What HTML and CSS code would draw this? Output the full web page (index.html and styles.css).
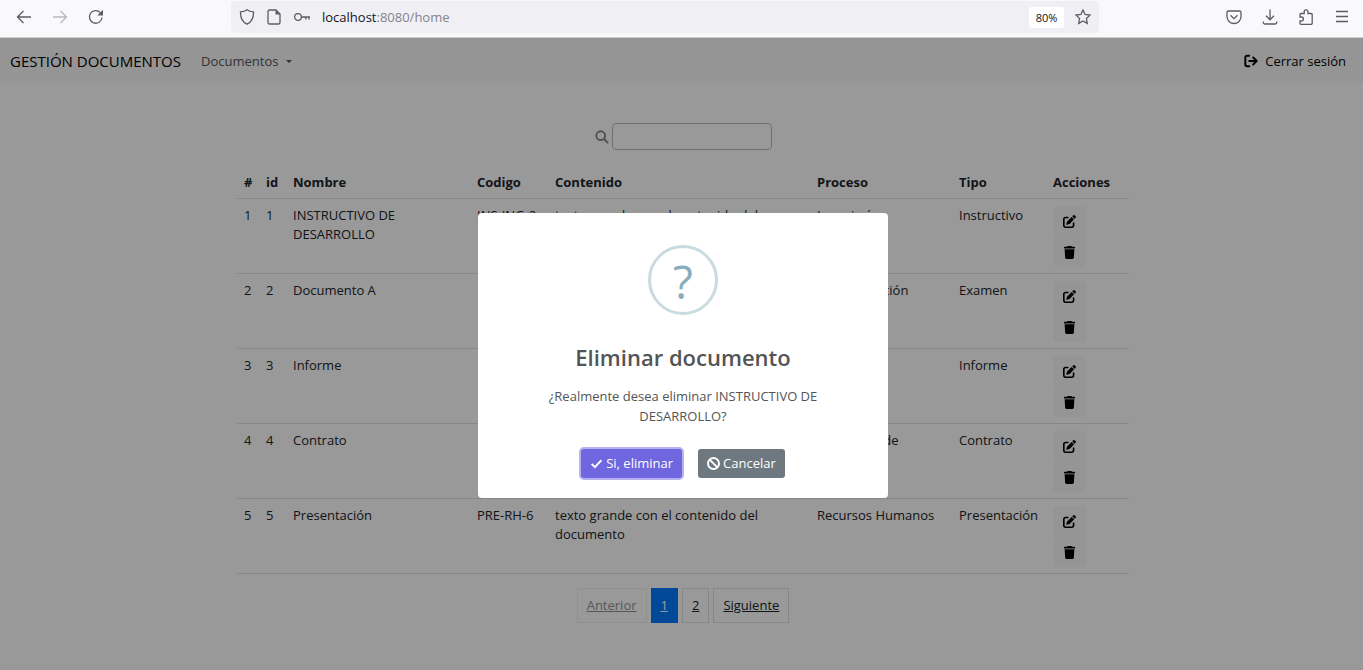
FILE: index.html
```html
<!DOCTYPE html>
<html lang="es">
<head>
<meta charset="utf-8">
<title>Gestión Documentos</title>
<link rel="stylesheet" href="styles.css">
</head>
<body>
<svg class="sprite" aria-hidden="true">
  <symbol id="edit" viewBox="0 0 512 512"><path d="M471.600 21.700c-21.900-21.900-57.300-21.900-79.200 0L362.300 51.700l97.900 97.900 30.100-30.100c21.900-21.900 21.900-57.300 0-79.200L471.600 21.700zm-299.200 220c-6.100 6.100-10.800 13.600-13.500 21.900l-29.600 88.800c-2.900 8.600-.6 18.100 5.800 24.600s15.900 8.700 24.600 5.800l88.800-29.600c8.200-2.700 15.700-7.400 21.900-13.500L437.700 172.300 339.700 74.300 172.400 241.700zM96 64C43 64 0 107 0 160V416c0 53 43 96 96 96H352c53 0 96-43 96-96V320c0-17.700-14.300-32-32-32s-32 14.300-32 32v96c0 17.700-14.300 32-32 32H96c-17.700 0-32-14.300-32-32V160c0-17.700 14.300-32 32-32h96c17.700 0 32-14.300 32-32s-14.300-32-32-32H96z"/></symbol>
  <symbol id="trash" viewBox="0 0 448 512"><path d="M135.200 17.700L128 32H32C14.300 32 0 46.300 0 64S14.300 96 32 96H416c17.700 0 32-14.300 32-32s-14.300-32-32-32H320l-7.200-14.300C307.400 6.800 296.300 0 284.200 0H163.800c-12.100 0-23.200 6.800-28.600 17.700zM416 128H32L53.200 467c1.600 25.300 22.600 45 47.900 45H346.900c25.300 0 46.300-19.700 47.900-45L416 128z"/></symbol>
</svg>

<header class="browser">
  <div class="browser-side">
    <button class="tool" aria-label="Atrás"><svg viewBox="0 0 16 16"><path d="M15 8H1.500M7.500 2L1.500 8l6 6"/></svg></button>
    <button class="tool tool-off" aria-label="Adelante"><svg viewBox="0 0 16 16"><path d="M1 8h13.500M8.500 2l6 6-6 6"/></svg></button>
    <button class="tool" aria-label="Recargar"><svg viewBox="0 0 16 16"><path d="M14 8.500A6.300 6.300 0 1 1 12.300 3.600"/><path class="solid" d="M15 .8v5.700H9.300z"/></svg></button>
  </div>
  <div class="address">
    <svg viewBox="0 0 16 16"><path d="M8 .8c2 1.600 4.300 2 6.500 2.100.2 5.800-1.500 9.900-6.500 12.300C3 12.800 1.300 8.700 1.500 2.900 3.700 2.800 6 2.400 8 .8z"/></svg>
    <svg class="page-icon" viewBox="0 0 16 16"><path d="M3.500 1H10l4 4v8.500a1.500 1.500 0 0 1-1.500 1.500h-9A1.500 1.500 0 0 1 2 13.500v-11A1.500 1.500 0 0 1 3.500 1z"/><path class="solid" d="M9.500 1v4.500H14z"/></svg>
    <svg class="key-icon" viewBox="0 0 18 16"><circle cx="5" cy="8" r="3.400"/><path d="M8.400 8H17M12.800 8v2.600M16 8v2.600"/></svg>
    <span class="url">localhost<span class="url-rest">:8080/home</span></span>
    <button class="zoom-level">80%</button>
    <svg viewBox="0 0 16 16"><path d="M8 1l2.100 4.500 4.900.6-3.600 3.400.9 4.900L8 12l-4.300 2.400.9-4.900L1 6.100l4.900-.6z"/></svg>
  </div>
  <div class="browser-side browser-side-end">
    <button class="tool" aria-label="Pocket"><svg viewBox="0 0 16 16"><path d="M2.500 2h11A1.500 1.500 0 0 1 15 3.500V7.500a7 7 0 0 1-14 0v-4A1.500 1.500 0 0 1 2.500 2zM4.500 6.300L8 9.600l3.500-3.300"/></svg></button>
    <button class="tool" aria-label="Descargas"><svg viewBox="0 0 16 16"><path d="M8 .5v10M4 6.800l4 4 4-4M1.300 12.500v1a1.500 1.500 0 0 0 1.500 1.500h10.400a1.500 1.500 0 0 0 1.500-1.500v-1"/></svg></button>
    <button class="tool" aria-label="Extensiones"><svg viewBox="0 0 16 16"><path d="M3 15.300h10.200a1 1 0 0 0 1-1V5.500a1 1 0 0 0-1-1H10V2.700a1.900 1.900 0 0 0-3.800 0v1.800H3a1 1 0 0 0-1 1V8h1.500a1.900 1.900 0 0 1 0 3.800H2v2.500a1 1 0 0 0 1 1z"/></svg></button>
    <button class="tool" aria-label="Menú"><svg viewBox="0 0 16 16"><path d="M2 2.500h12M2 7.500h12M2 12.500h12"/></svg></button>
  </div>
</header>

<div class="app">
  <nav class="navbar">
    <a class="brand" href="#">GESTIÓN DOCUMENTOS</a>
    <button class="menu">Documentos<span class="caret"></span></button>
    <a class="logout" href="#"><svg viewBox="0 0 16 16"><path d="M6 2H3.500A2 2 0 0 0 1.500 4v8a2 2 0 0 0 2 2H6M6 8h8M10.500 4l4 4-4 4"/></svg>Cerrar sesión</a>
  </nav>
  <main class="content">
    <label class="search"><svg viewBox="0 0 16 16"><circle cx="6.500" cy="6.500" r="5"/><path d="M10.300 10.300L15 15"/></svg><input type="text" aria-label="Buscar"></label>
    <table class="docs">
      <colgroup><col class="c-num"><col class="c-id"><col class="c-name"><col class="c-code"><col class="c-text"><col class="c-proc"><col class="c-type"><col class="c-act"></colgroup>
      <thead><tr><th>#</th><th>id</th><th>Nombre</th><th>Codigo</th><th>Contenido</th><th>Proceso</th><th>Tipo</th><th>Acciones</th></tr></thead>
      <tbody>
        <tr><td>1</td><td>1</td><td>INSTRUCTIVO DE<br>DESARROLLO</td><td>INS-ING-2</td><td>texto grande con el contenido del documento</td><td>Ingeniería</td><td>Instructivo</td><td><button class="act" aria-label="Editar"><svg><use href="#edit"/></svg></button><button class="act" aria-label="Eliminar"><svg><use href="#trash"/></svg></button></td></tr>
        <tr><td>2</td><td>2</td><td>Documento A</td><td></td><td></td><td>Administración</td><td>Examen</td><td><button class="act" aria-label="Editar"><svg><use href="#edit"/></svg></button><button class="act" aria-label="Eliminar"><svg><use href="#trash"/></svg></button></td></tr>
        <tr><td>3</td><td>3</td><td>Informe</td><td></td><td></td><td></td><td>Informe</td><td><button class="act" aria-label="Editar"><svg><use href="#edit"/></svg></button><button class="act" aria-label="Eliminar"><svg><use href="#trash"/></svg></button></td></tr>
        <tr><td>4</td><td>4</td><td>Contrato</td><td></td><td></td><td>Desarrollo de</td><td>Contrato</td><td><button class="act" aria-label="Editar"><svg><use href="#edit"/></svg></button><button class="act" aria-label="Eliminar"><svg><use href="#trash"/></svg></button></td></tr>
        <tr><td>5</td><td>5</td><td>Presentación</td><td>PRE-RH-6</td><td>texto grande con el contenido del documento</td><td>Recursos Humanos</td><td>Presentación</td><td><button class="act" aria-label="Editar"><svg><use href="#edit"/></svg></button><button class="act" aria-label="Eliminar"><svg><use href="#trash"/></svg></button></td></tr>
      </tbody>
    </table>
    <nav class="pages" aria-label="Paginación">
      <a class="page page-off" href="#">Anterior</a><a class="page page-on" href="#">1</a><a class="page" href="#">2</a><a class="page" href="#">Siguiente</a>
    </nav>
  </main>

  <div class="overlay">
    <section class="modal" role="dialog" aria-modal="true" aria-labelledby="modal-title">
      <div class="question">?</div>
      <h2 class="modal-title" id="modal-title">Eliminar documento</h2>
      <p class="modal-text">¿Realmente desea eliminar INSTRUCTIVO DE DESARROLLO?</p>
      <div class="modal-actions">
        <button class="btn btn-ok"><svg viewBox="0 0 16 16"><path d="M2 8.500l4 4 8-8.500"/></svg>Si, eliminar</button>
        <button class="btn btn-cancel"><svg viewBox="0 0 16 16"><circle cx="8" cy="8" r="6.800"/><path d="M3.300 3.300l9.400 9.400"/></svg>Cancelar</button>
      </div>
    </section>
  </div>
</div>
</body>
</html>
```
FILE: styles.css
```css
* { box-sizing: border-box; }
body {
  margin: 0;
  min-height: 100vh;
  display: flex;
  flex-direction: column;
  font: 13px/19px "Open Sans", "Noto Sans", sans-serif;
  color: #212529;
  background: #fff;
}
button { font: inherit; color: inherit; border: 0; background: none; padding: 0; }
a { color: inherit; text-decoration: none; }
svg { fill: none; stroke: currentColor; flex: none; }
.solid { fill: currentColor; stroke: none; }
.sprite { position: absolute; width: 0; height: 0; }

/* browser bar */
.browser {
  display: flex;
  height: 38px;
  padding: 1px 13px 4px 16px;
  background: #f9f9fb;
  border-bottom: 1px solid #ccc;
  color: #5b5b66;
}
.browser svg { width: 16px; height: 16px; stroke-width: 1.3; }
.browser-side { flex: 215 1 0; display: flex; align-items: center; gap: 20px; }
.browser-side-end { flex-grow: 251; justify-content: flex-end; }
.tool { display: flex; }
.tool-off { opacity: .4; }
.address {
  flex: 0 1 868px;
  display: flex;
  align-items: center;
  gap: 11px;
  padding: 0 8px;
  background: #f0f0f4;
  border-radius: 4px;
}
.address .key-icon { width: 18px; }
.url { flex: 1; font-size: 13px; color: #15141a; }
.url-rest { color: #85848c; }
.zoom-level {
  width: 35px;
  height: 21px;
  border-radius: 3px;
  background: #fff;
  color: #15141a;
  font-size: 11px;
}

/* application */
.app { position: relative; flex: 1; }
.navbar {
  display: flex;
  align-items: center;
  height: 45px;
  padding: 1px 17px 0 10px;
  background: #f8f9fa;
}
.brand { font-size: 15px; color: #000; }
.menu { display: flex; align-items: center; gap: 8px; margin-left: 20px; color: #555; }
.caret { border: 3px solid transparent; border-top-color: currentColor; border-bottom: 0; }
.logout { display: flex; align-items: center; gap: 7px; margin-left: auto; color: #000; }
.logout svg { width: 14px; height: 14px; stroke-width: 2.2; stroke-linecap: round; stroke-linejoin: round; }

.content {
  display: flex;
  flex-direction: column;
  align-items: center;
  padding: 40px 0 40px 3px;
}
.search { display: flex; align-items: center; gap: 3px; margin-bottom: 17px; color: #888; }
.search svg { width: 14px; height: 14px; stroke-width: 2.2; }
.search input {
  width: 160px;
  height: 27px;
  border: 1px solid #bbb;
  border-radius: 4px;
  background: #fff;
  font: inherit;
}
.docs { width: 100%; max-width: 892px; table-layout: fixed; border-collapse: separate; border-spacing: 0; }
.c-num { width: 22px; } .c-id { width: 27px; } .c-name { width: 184px; } .c-code { width: 78px; }
.c-text { width: 262px; } .c-proc { width: 142px; } .c-type { width: 94px; } .c-act { width: 83px; }
.docs th, .docs td {
  padding: 6px 7px;
  text-align: left;
  vertical-align: top;
  border-bottom: 1px solid #dee2e6;
}
.docs td { padding-top: 7px; }
.docs th { white-space: nowrap; }
.act {
  display: flex;
  align-items: center;
  justify-content: center;
  width: 33px;
  height: 31px;
  border-radius: 4px;
  background: #f8f9fa;
  color: #000;
}
.act + .act { height: 30px; }
.act svg { width: 13px; height: 13px; fill: currentColor; stroke: none; }

.pages { display: flex; gap: 4px; margin-top: 14px; }
.page {
  padding: 7px 9px;
  border: 1px solid #dee2e6;
  text-decoration: underline;
}
.page-on { background: #007bff; border-color: #007bff; color: #fff; }
.page-off { opacity: .5; }

/* dialog */
.overlay {
  position: absolute;
  inset: 0;
  display: flex;
  align-items: center;
  justify-content: center;
  padding: 3px 0 0 3px;
  background: rgba(0, 0, 0, .4);
}
.modal {
  width: 410px;
  padding: 32px 52px 20px;
  display: flex;
  flex-direction: column;
  align-items: center;
  border-radius: 4px;
  background: #fff;
  color: #545454;
  text-align: center;
}
.question {
  width: 70px;
  height: 70px;
  border: 3px solid #c9dae1;
  border-radius: 50%;
  color: #87adbd;
  font-size: 46px;
  line-height: 66px;
}
.modal-title { margin: 25px 0 12px; font-size: 22px; font-weight: 600; line-height: 34px; }
.modal-text { margin: 0; padding: 0 12px; font-size: 13px; line-height: 20px; }
.modal-actions { display: flex; gap: 16px; margin-top: 23px; }
.btn {
  display: flex;
  align-items: center;
  gap: 3px;
  padding: 5px 9px;
  border-radius: 3px;
  color: #fff;
}
.btn svg { width: 13px; height: 13px; stroke-width: 2.4; }
.btn-ok { background: #7066e0; box-shadow: 0 0 0 2px #b7b2ef; }
.btn-cancel { background: #6e7881; }
```
